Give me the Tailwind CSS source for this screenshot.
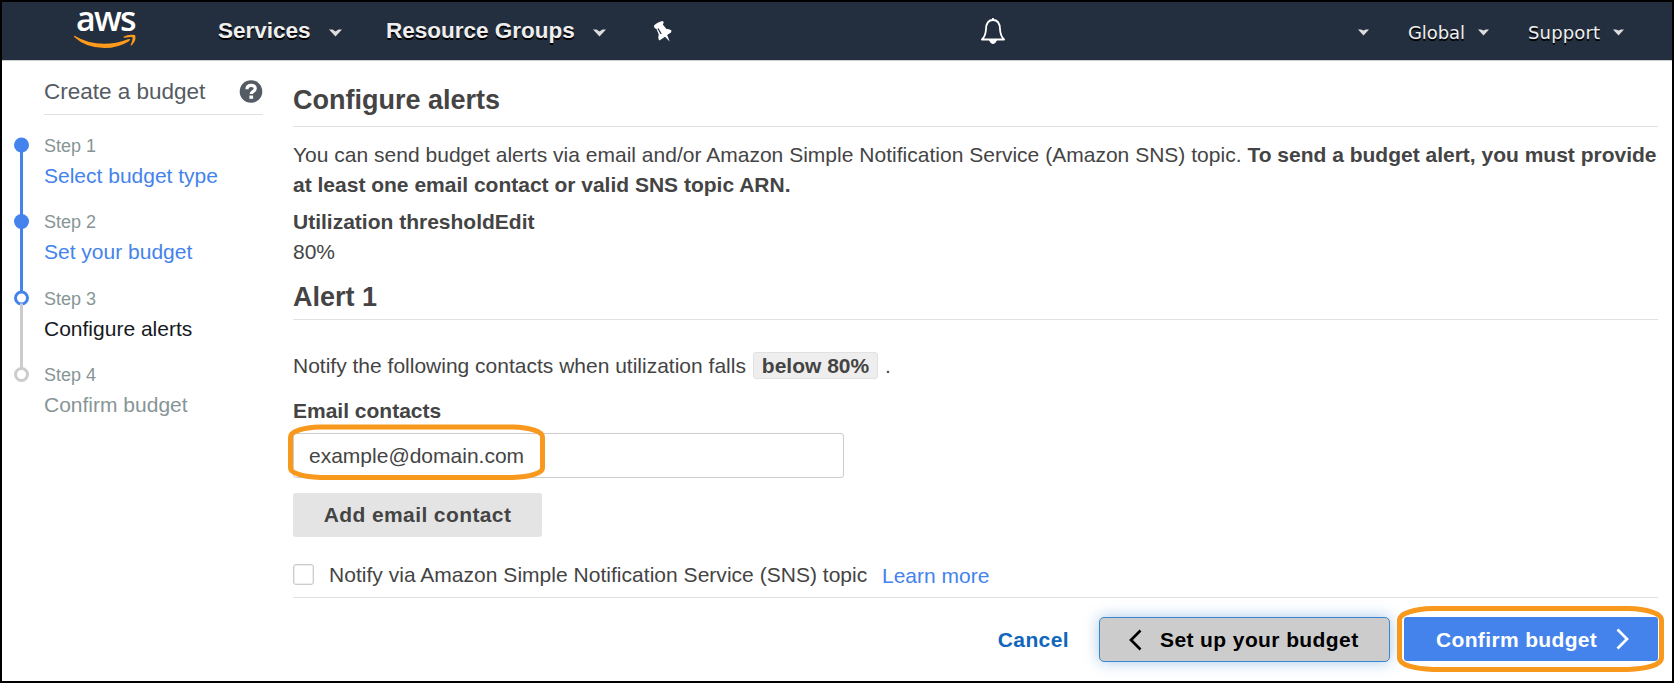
<!DOCTYPE html>
<html lang="en">
<head>
<meta charset="utf-8">
<title>Configure alerts</title>
<script src="https://cdn.jsdelivr.net/npm/@tailwindcss/browser@4"></script>
</head>
<body class="h-[683px] w-[1674px] overflow-hidden bg-white font-['Liberation_Sans',Arial,sans-serif] text-[21px] leading-[30px] text-[#444444]">
<div class="flex h-[683px] w-[1674px] flex-col border-2 border-black">
  <header class="flex h-[59px] shrink-0 items-start border-b border-[#cccccc] bg-[#232f3e] text-[#eeeeee]">
    <a class="ml-[71px] flex w-[64px] flex-col items-center" aria-label="aws">
      <span class="-mb-[4px] -mt-[4px] pl-px font-['Open_Sans',sans-serif] text-[34px] font-semibold leading-[40px] tracking-[-1.7px] text-white">aws</span>
      <svg class="h-[16px] w-[64px]" viewBox="0 0 64 16" fill="#ff9a1a"><path d="M1.500 1.700Q15 9.800 31 9.800Q43 9.800 55 5.300Q57 4.700 57.300 5.600Q57.300 6.400 55.500 7.400Q45 14 31.500 14Q13 14 1.200 3Q.5 1.800 1.500 1.700Z"/><path d="M50.500 2.800Q55 .2 62 1Q64 5.500 59 11Q57.300 12.300 57.700 10.700Q60 5.500 59.500 3.300Q57.500 2.500 52 3.700Q50 3.800 50.500 2.800Z"/></svg>
    </a>
    <nav class="flex h-[58px] items-center pb-[1px] text-[22.5px] font-bold [text-shadow:0_2px_0_#000]">
      <span class="ml-[81px] w-[94px]">Services</span>
      <svg class="ml-[17px] mt-[4px] h-[8px] w-[13px]" viewBox="0 0 13 8" fill="#dddddd"><path d="M0 .5h3.500l3 2l3-2H13L6.500 7.500Z"/></svg>
      <span class="ml-[44px] w-[189px] whitespace-nowrap">Resource Groups</span>
      <svg class="ml-[18px] mt-[4px] h-[8px] w-[13px]" viewBox="0 0 13 8" fill="#dddddd"><path d="M0 .5h3.500l3 2l3-2H13L6.500 7.500Z"/></svg>
      <svg class="ml-[47px] mt-[2px] h-[21px] w-[19px]" viewBox="0 0 19 21" fill="#ffffff"><path d="M1 4.500Q5 .5 10 0Q11.500 1.500 9.800 3.500L13.500 8Q16.500 7.500 18.500 9.500L18 11.500L14.200 14L16.700 20.500L12 15.700L6.500 19.500Q4.500 17.500 5.800 13.500L3.500 8Q1 7.500 1 4.500Z"/><path d="M5 7.500L8.200 13" stroke="#232f3e" stroke-width="1.300"/></svg>
    </nav>
    <svg class="ml-[308px] mt-[15px] h-[28px] w-[26px]" viewBox="0 0 26 28" fill="none" stroke="#ffffff" stroke-width="1.800" stroke-linejoin="round"><path d="M13 3C8 3 6.200 7 6 12C5.800 17 5 19.500 2 22.500H24C21 19.500 20.200 17 20 12C19.800 7 18 3 13 3Z"/><path d="M13 1V3"/><path d="M9.500 23Q10.500 26.500 13 26.500T16.500 23Z" fill="#ffffff" stroke-width="1"/></svg>
    <nav class="ml-auto mr-[48px] flex h-[58px] items-center font-['DejaVu_Sans',sans-serif] text-[18px] [text-shadow:0_2px_0_#000]">
      <svg class="mt-[3px] h-[7px] w-[11px]" viewBox="0 0 11 7" fill="#dddddd"><path d="M0 .5h3l2.500 1l2.500-1h3L5.500 6.500Z"/></svg>
      <span class="ml-[39px] mt-[3px] w-[58px] tracking-[-0.1px]">Global</span>
      <svg class="ml-[12px] mt-[3px] h-[7px] w-[11px]" viewBox="0 0 11 7" fill="#dddddd"><path d="M0 .5h3l2.500 1l2.500-1h3L5.500 6.500Z"/></svg>
      <span class="ml-[39px] mt-[3px] w-[73px] tracking-[0.15px]">Support</span>
      <svg class="ml-[12px] mt-[3px] h-[7px] w-[11px]" viewBox="0 0 11 7" fill="#dddddd"><path d="M0 .5h3l2.500 1l2.500-1h3L5.500 6.500Z"/></svg>
    </nav>
  </header>

  <div class="flex min-h-0 flex-1">
    <aside class="w-[261px] shrink-0 pl-[12px]">
      <div class="ml-[30px] flex h-[54px] items-start justify-between border-b border-[#e1e1e1] pt-[16px]">
        <span class="text-[22.5px] text-[#545b64]">Create a budget</span>
        <svg class="mt-[3px] h-[24px] w-[24px]" viewBox="0 0 24 24"><circle cx="12" cy="11.500" r="11.300" fill="#545b64"/><path d="M8 9.300Q8 5.400 12.200 5.400T16.200 8.800C16.200 11.300 12.200 11.300 12.200 14" fill="none" stroke="#ffffff" stroke-width="3.200"/><rect x="10.400" y="15.500" width="3.700" height="3.300" fill="#ffffff"/></svg>
      </div>
      <div class="flex pt-[17px]">
        <svg class="mt-[5px] h-[246px] w-[15px] shrink-0" viewBox="0 0 15 246"><path d="M7.500 8V161" stroke="#4483ec" stroke-width="3"/><path d="M7.500 169V232" stroke="#cccccc" stroke-width="3"/><circle cx="7.500" cy="8" r="7.500" fill="#4483ec"/><circle cx="7.500" cy="84.500" r="7.500" fill="#4483ec"/><circle cx="7.500" cy="161" r="6" fill="#ffffff" stroke="#4483ec" stroke-width="3"/><path d="M7.500 166.500V172" stroke="#cccccc" stroke-width="3"/><circle cx="7.500" cy="237.500" r="6" fill="#ffffff" stroke="#cccccc" stroke-width="3"/></svg>
        <ol class="-mt-[0.4px] ml-[15px] flex flex-col gap-[17.5px] text-[#4483ec]">
          <li><p class="text-[18px] leading-[28px] text-[#879596]">Step 1</p><p class="leading-[31px]">Select budget type</p></li>
          <li><p class="text-[18px] leading-[28px] text-[#879596]">Step 2</p><p class="leading-[31px]">Set your budget</p></li>
          <li><p class="text-[18px] leading-[28px] text-[#879596]">Step 3</p><p class="leading-[31px] text-[#16191f]">Configure alerts</p></li>
          <li><p class="text-[18px] leading-[28px] text-[#879596]">Step 4</p><p class="leading-[31px] text-[#879596]">Confirm budget</p></li>
        </ol>
      </div>
    </aside>

    <main class="ml-[30px] w-[1365px]">
      <h1 class="h-[66px] border-b border-[#e1e1e1] pt-[19px] text-[27px] font-bold leading-[40px]">Configure alerts</h1>
      <p class="mt-[13px] whitespace-nowrap"><span class="tracking-[0.015px]">You can send budget alerts via email and/or Amazon Simple Notification Service (Amazon SNS) topic. </span><b>To send a budget alert, you must provide<br>at least one email contact or valid SNS topic ARN.</b></p>
      <p class="mt-[7px] font-bold">Utilization thresholdEdit</p>
      <p>80%</p>
      <h2 class="mt-[10px] h-[43px] border-b border-[#e1e1e1] text-[27px] font-bold leading-[40px]">Alert 1</h2>
      <div class="mt-[32px] flex h-[27px] items-center"><span class="w-[460px] whitespace-nowrap">Notify the following contacts when utilization falls</span><span class="flex h-[27px] w-[125px] items-center justify-center rounded-[3px] border border-[#e1e1e1] bg-[#eeeeee] font-bold">below 80%</span><span class="ml-[7px]">.</span></div>
      <p class="mt-[17px] font-bold">Email contacts</p>
      <div class="relative mt-[7px] flex h-[45px] w-[551px] items-center rounded-[3px] border border-[#cccccc] pl-[15px]">
        <span>example@domain.com</span>
        <svg class="absolute -left-[6px] -top-[10px] h-[57px] w-[258px]" viewBox="0 0 258 57" fill="none" stroke="#f8981d" stroke-width="5"><path d="M32 3H225C242 3.500 254.500 7.500 254.500 13V44C254.500 49 242 53 225 53.500H32C15 53 2.500 49 2.500 44V13C2.500 7.500 15 3.500 32 3Z"/></svg>
      </div>
      <button class="mt-[15px] flex h-[44px] w-[249px] items-center justify-center rounded-[3px] bg-[#e4e4e4] font-bold tracking-[0.4px]">Add email contact</button>
      <div class="mt-[23px] flex h-[38px] items-start border-b border-[#e1e1e1]">
        <span class="mt-[4px] h-[21px] w-[21px] rounded-[3px] border-[1.5px] border-[#cccccc] bg-white shadow-[inset_0_0_0_0.5px_#dddddd]"></span>
        <span class="ml-[15px] w-[553px] whitespace-nowrap tracking-[0.025px]">Notify via Amazon Simple Notification Service (SNS) topic</span>
        <a class="pt-px text-[#4483ec]">Learn more</a>
      </div>
      <div class="mt-[19px] flex h-[44px] justify-end font-bold tracking-[0.4px]">
        <a class="flex items-center pt-px text-[#1166bb]">Cancel</a>
        <button class="ml-[30px] flex h-[45px] w-[291px] items-center rounded-[5px] border border-[#3c86cf] bg-[#cccccc] pl-[29px] text-black shadow-[0_0_15px_rgba(60,134,207,0.45)]">
          <svg class="h-[22px] w-[13px]" viewBox="0 0 13 22" fill="none" stroke="#000000" stroke-width="2.700"><path d="M11.500 1.500L2 11L11.500 20.500"/></svg>
          <span class="ml-[18px] whitespace-nowrap">Set up your budget</span>
        </button>
        <button class="relative ml-[14px] flex h-[44px] w-[254px] items-center rounded-[3px] bg-[#4483ec] pl-[32px] text-white">
          <span class="w-[180px] whitespace-nowrap pt-px text-left tracking-[0.35px]">Confirm budget</span>
          <svg class="h-[22px] w-[13px]" viewBox="0 0 13 22" fill="none" stroke="#ffffff" stroke-width="2.700"><path d="M1.500 1.500L11 11L1.500 20.500"/></svg>
          <svg class="absolute -left-[7px] -top-[11px] h-[66px] w-[267px]" viewBox="0 0 267 66" fill="none" stroke="#f8981d" stroke-width="5"><path d="M36 2.500H231C249 3 264.500 7 264.500 14V52C264.500 59 249 63 231 63.500H36C18 63 2.500 59 2.500 52V14C2.500 7 18 3 36 2.500Z"/></svg>
        </button>
      </div>
    </main>
  </div>
</div>
</body>
</html>
